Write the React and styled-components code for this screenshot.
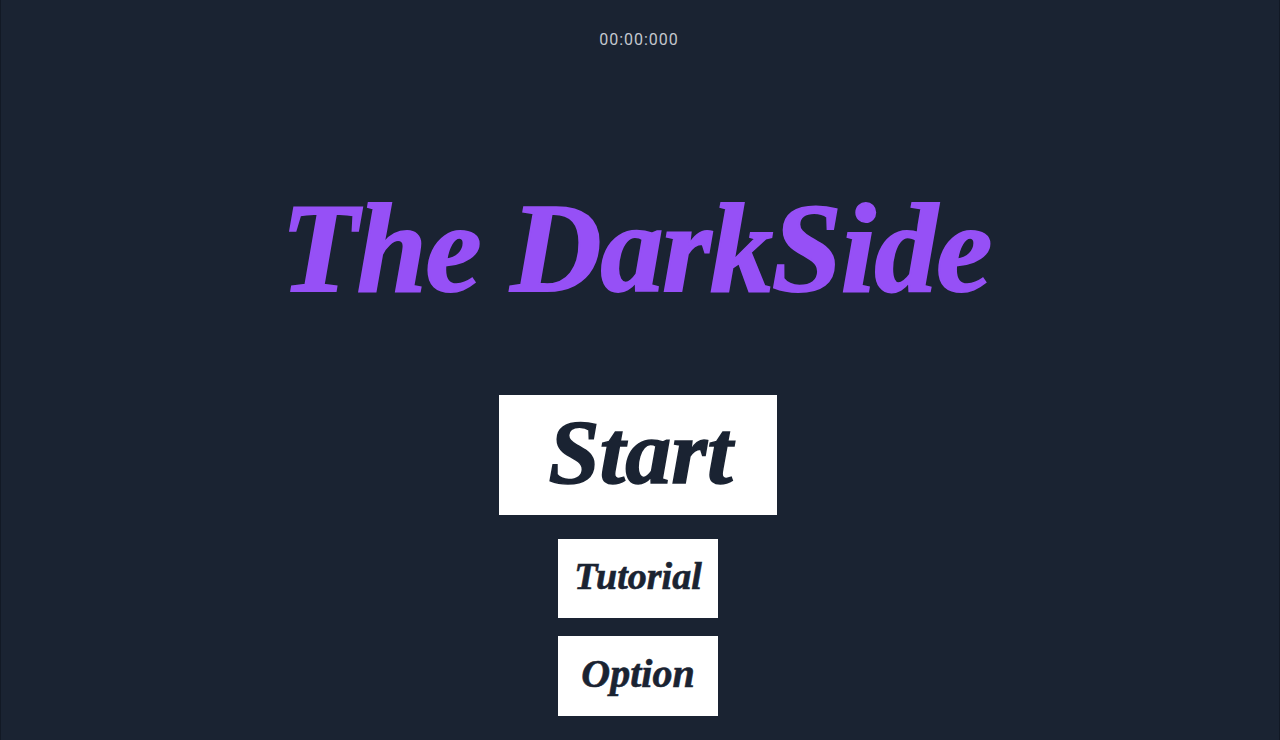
import React from 'react';
import styled, { createGlobalStyle } from 'styled-components';

const GlobalStyle = createGlobalStyle`
  html, body {
    margin: 0;
    padding: 0;
    background: #1a2332;
  }
`;

const Screen = styled.div`
  width: 1280px;
  height: 740px;
  overflow: hidden;
  box-sizing: border-box;
  padding-right: 2px;
  display: flex;
  flex-direction: column;
  align-items: center;
  background: #1a2332;
  border-left: 1px solid #121925;
  border-right: 1px solid #121925;
`;

const Timer = styled.div`
  margin-top: 30px;
  height: 19px;
  line-height: 19px;
  font-family: Roboto, "Liberation Sans", sans-serif;
  font-size: 16px;
  letter-spacing: 1px;
  color: #c4c8cf;
`;

const Title = styled.h1`
  margin: 140px 6px 0 0;
  height: 120px;
  line-height: 120px;
  font-family: "Liberation Serif", serif;
  font-style: italic;
  font-weight: 700;
  font-size: 126px;
  letter-spacing: -1.2px;
  white-space: nowrap;
  color: #9650f6;
  -webkit-text-stroke: 2px #9650f6;
`;

const Menu = styled.nav`
  margin: 86px 2px 0 0;
  display: flex;
  flex-direction: column;
  align-items: center;
`;

const MenuButton = styled.button`
  display: block;
  box-sizing: border-box;
  padding: 0 0 6px ${p => (p.$big ? 5 : 0)}px;
  border: 0;
  border-radius: 0;
  background: #fff;
  color: #1a2332;
  width: ${p => (p.$big ? 278 : 160)}px;
  height: ${p => (p.$big ? 120 : p.$h)}px;
  margin-top: ${p => p.$gap}px;
  font-family: "Liberation Serif", serif;
  font-style: italic;
  font-weight: 700;
  font-size: ${p => p.$size}px;
  -webkit-text-stroke: ${p => (p.$big ? 1.5 : 0.6)}px #1a2332;
`;

export default function App() {
  return (
    <Screen>
      <GlobalStyle />
      <Timer>00:00:000</Timer>
      <Title>The DarkSide</Title>
      <Menu>
        <MenuButton $big $gap={0} $size={92}>Start</MenuButton>
        <MenuButton $gap={24} $h={79} $size={38}>Tutorial</MenuButton>
        <MenuButton $gap={18} $h={80} $size={40}>Option</MenuButton>
      </Menu>
    </Screen>
  );
}
